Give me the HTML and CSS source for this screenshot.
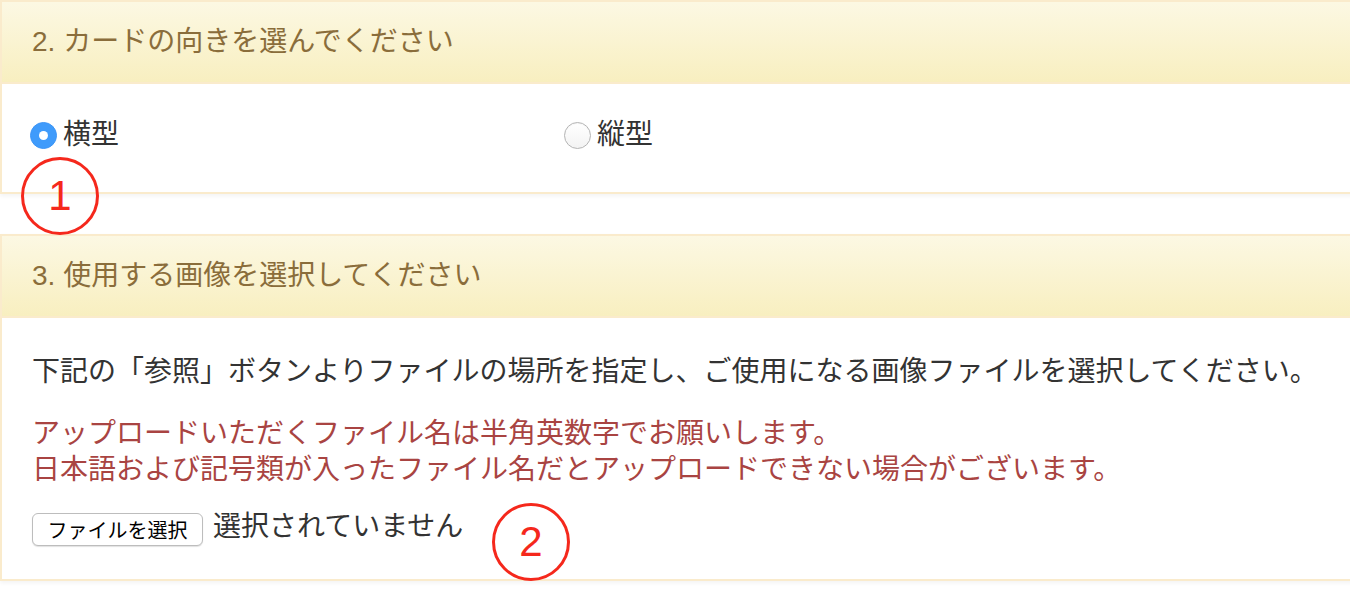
FILE: index.html
```html
<!DOCTYPE html>
<html lang="ja">
<head>
<meta charset="utf-8">
<link rel="stylesheet" href="styles.css">
</head>
<body>
<div class="page">
  <section class="panel">
    <div class="panel-heading">2. カードの向きを選んでください</div>
    <div class="panel-body orient">
      <label class="opt opt-first"><input type="radio" name="o" checked><span>横型</span></label>
      <label class="opt"><input type="radio" name="o"><span>縦型</span></label>
    </div>
  </section>
  <section class="panel">
    <div class="panel-heading">3. 使用する画像を選択してください</div>
    <div class="panel-body files">
      <p class="lead">下記の「参照」ボタンよりファイルの場所を指定し、ご使用になる画像ファイルを選択してください。</p>
      <p class="warn">アップロードいただくファイル名は半角英数字でお願いします。<br>日本語および記号類が入ったファイル名だとアップロードできない場合がございます。</p>
      <div class="file-row"><button class="file-btn" type="button">ファイルを選択</button><span class="file-none">選択されていません</span></div>
    </div>
  </section>
  <div class="mark mark-1">1</div>
  <div class="mark mark-2">2</div>
</div>
</body>
</html>
```

FILE: styles.css
```css
html, body {
  margin: 0;
  padding: 0;
  background: #fff;
  overflow: hidden;
}
body {
  font-family: "Liberation Sans", "Noto Sans CJK JP", sans-serif;
  color: #333;
  font-size: 28px;
}
.page {
  position: relative;
  width: 1360px;
}
.panel {
  border: 2px solid #faebcc;
  background: #fff;
  box-shadow: 0 2px 4px rgba(0, 0, 0, 0.05);
  margin-bottom: 40px;
}
.panel-heading {
  padding: 20px 30px;
  line-height: 40px;
  font-size: 28px;
  color: #8a6d3b;
  background: linear-gradient(to bottom, #fcf8e3 0, #f8efc0 100%);
  border-bottom: 2px solid #faebcc;
}
.panel-body {
  padding: 30px;
}
.files {
  padding-top: 35px;
}
.orient {
  display: flex;
  align-items: center;
  padding-bottom: 36px;
  height: 42px;
}
.opt {
  display: flex;
  align-items: center;
  line-height: 40px;
}
.opt-first {
  width: 534px;
}
.opt input {
  -webkit-appearance: none;
  appearance: none;
  margin: 0 6px 0 -2px;
  width: 27px;
  height: 27px;
  border-radius: 50%;
  border: 1px solid #b4b4b4;
  background: linear-gradient(to bottom, #fff, #f3f3f3);
  box-shadow: inset 0 1px 1px rgba(0,0,0,0.04);
  position: relative;
}
.opt input:checked {
  border-color: #3d95f6;
  background: #3f9bfb;
  box-shadow: none;
}
.opt input:checked::after {
  content: "";
  position: absolute;
  left: 50%;
  top: 50%;
  width: 9px;
  height: 9px;
  margin: -4.5px 0 0 -4.5px;
  border-radius: 50%;
  background: #fff;
}
p {
  margin: 0;
}
.lead {
  line-height: 38px;
  margin-bottom: 25px;
}
.warn {
  color: #a94442;
  line-height: 36px;
  margin-bottom: 22px;
}
.file-row {
  display: flex;
  align-items: flex-start;
  height: 39px;
}
.file-btn {
  width: 171px;
  height: 33px;
  margin: 3px 0 0;
  padding: 0;
  border: 1px solid #bdbdbd;
  border-radius: 6px;
  background: #fff;
  box-shadow: 0 1px 1px rgba(0,0,0,0.12);
  font-family: "Noto Sans CJK JP", sans-serif;
  font-size: 20px;
  color: #000;
  line-height: 31px;
}
.file-none {
  margin: -3px 0 0 10px;
  line-height: 40px;
}
.mark {
  position: absolute;
  box-sizing: border-box;
  width: 78px;
  height: 78px;
  border: 3px solid #f5281c;
  border-radius: 50%;
  color: #f5281c;
  font-family: "Liberation Sans", sans-serif;
  font-size: 42px;
  line-height: 72px;
  text-align: center;
}
.mark-1 {
  left: 21px;
  top: 157px;
}
.mark-2 {
  left: 492px;
  top: 503px;
}
```
